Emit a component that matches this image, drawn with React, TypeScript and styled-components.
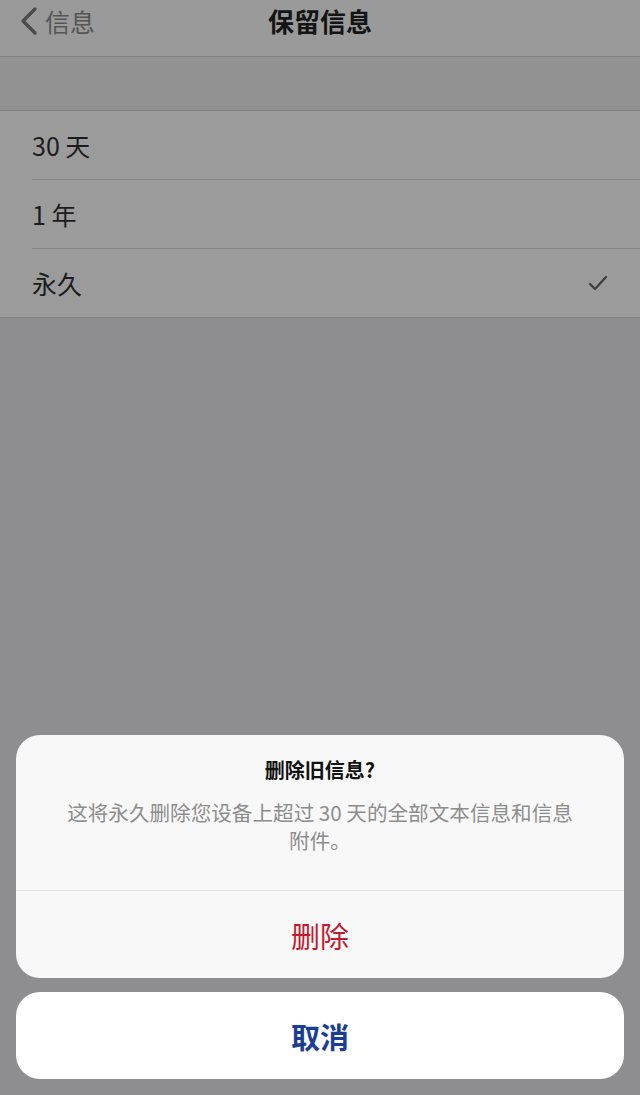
import React from "react";
import styled, { createGlobalStyle } from "styled-components";

const Global = createGlobalStyle`
  html, body { margin: 0; padding: 0; background: #8e8e91; }
  body { font-family: "Noto Sans CJK SC", "Noto Sans", sans-serif; -webkit-font-smoothing: antialiased; }
  * { box-sizing: border-box; }
`;

const Screen = styled.div`
  width: 640px;
  height: 1095px;
  display: flex;
  flex-direction: column;
  background: #8e8e91;
  overflow: hidden;
`;

const NavBar = styled.div`
  height: 57px;
  flex: none;
  display: grid;
  grid-template-columns: 1fr auto 1fr;
  align-items: center;
  padding: 0 0 14px 0;
  background: #9a9a9a;
  border-bottom: 1px solid #808080;
`;

const Back = styled.div`
  display: flex;
  align-items: center;
  gap: 6px;
  padding-left: 19px;
  color: #555555;
  font-size: 25px;
  line-height: 30px;
`;

const NavTitle = styled.div`
  font-size: 26px;
  font-weight: 700;
  color: #141414;
  line-height: 30px;
`;

const GroupGap = styled.div`
  height: 53px;
  flex: none;
  background: #929293;
`;

const List = styled.div`
  flex: none;
  background: #9b9b9b;
  border-top: 1px solid #808080;
  border-bottom: 1px solid #808080;
`;

const Row = styled.div<{ $last?: boolean }>`
  height: ${(p) => (p.$last ? 68 : 69)}px;
  margin-left: 32px;
  padding-right: 32px;
  display: flex;
  align-items: center;
  justify-content: space-between;
  border-bottom: ${(p) => (p.$last ? "none" : "1px solid #858585")};
  font-size: 25px;
  color: #1c1c1c;
`;

const Filler = styled.div`
  flex: 1;
`;

const Sheet = styled.div`
  flex: none;
  display: flex;
  flex-direction: column;
  gap: 14px;
  padding: 0 16px 16px;
`;

const AlertCard = styled.div`
  background: #f8f8f8;
  border-radius: 24px;
  overflow: hidden;
  display: flex;
  flex-direction: column;
`;

const AlertHeader = styled.div`
  padding: 21px 50px 36px;
  display: flex;
  flex-direction: column;
  align-items: center;
  gap: 14px;
  border-bottom: 1px solid #e2e2e2;
  text-align: center;
`;

const AlertTitle = styled.div`
  font-size: 20px;
  font-weight: 700;
  line-height: 28px;
  color: #111111;
`;

const AlertMessage = styled.div`
  font-size: 20.6px;
  line-height: 28px;
  color: #8d8d8d;
`;

const ActionButton = styled.div<{ $tone: "destructive" | "cancel" }>`
  height: 87px;
  display: flex;
  align-items: center;
  justify-content: center;
  font-size: 29px;
  font-weight: ${(p) => (p.$tone === "cancel" ? 600 : 400)};
  color: ${(p) => (p.$tone === "cancel" ? "#1a3e98" : "#c41a2e")};
  background: ${(p) => (p.$tone === "cancel" ? "#ffffff" : "transparent")};
  border-radius: ${(p) => (p.$tone === "cancel" ? "24px" : "0")};
`;

const Chevron = () => (
  <svg width="20" height="30" viewBox="0 0 20 30" fill="none">
    <path d="M16 3 L4 15 L16 27" stroke="#4c4c4c" strokeWidth="3.4" strokeLinecap="round" strokeLinejoin="round" />
  </svg>
);

const Check = () => (
  <svg width="20" height="16" viewBox="0 0 20 16" fill="none">
    <path d="M2 9 L7 14 L18 2" stroke="#3e3e3e" strokeWidth="2.2" strokeLinecap="round" strokeLinejoin="round" />
  </svg>
);

const options = [
  { label: "30 天", selected: false },
  { label: "1 年", selected: false },
  { label: "永久", selected: true },
];

export default function App() {
  return (
    <>
      <Global />
      <Screen>
        <NavBar>
          <Back>
            <Chevron />
            <span>信息</span>
          </Back>
          <NavTitle>保留信息</NavTitle>
          <div />
        </NavBar>
        <GroupGap />
        <List>
          {options.map((o, i) => (
            <Row key={o.label} $last={i === options.length - 1}>
              <span>{o.label}</span>
              {o.selected && <Check />}
            </Row>
          ))}
        </List>
        <Filler />
        <Sheet>
          <AlertCard>
            <AlertHeader>
              <AlertTitle>删除旧信息?</AlertTitle>
              <AlertMessage>这将永久删除您设备上超过 30 天的全部文本信息和信息附件。</AlertMessage>
            </AlertHeader>
            <ActionButton $tone="destructive">删除</ActionButton>
          </AlertCard>
          <ActionButton $tone="cancel">取消</ActionButton>
        </Sheet>
      </Screen>
    </>
  );
}
